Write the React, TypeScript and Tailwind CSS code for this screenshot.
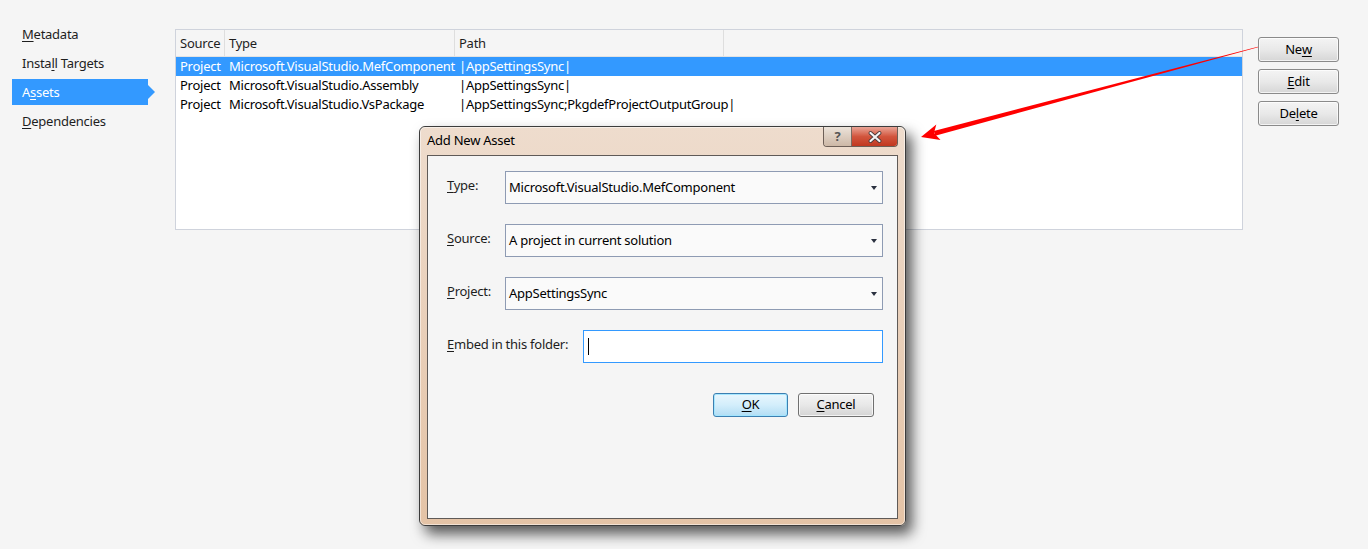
import React from "react";

const font = { fontFamily: '"Noto Sans", "Open Sans", Arial, sans-serif' } as const;

function U({ children }: { children: React.ReactNode }) {
  return <span className="underline underline-offset-2 decoration-1">{children}</span>;
}

function NavItem({ active, children }: { active?: boolean; children: React.ReactNode }) {
  if (active) {
    return (
      <div className="flex h-[26px] items-center">
        <div className="flex h-[26px] w-[136px] items-center bg-[#3399ff] pl-[10px] pt-[1px] text-white">{children}</div>
        <div className="h-0 w-0 border-y-[7px] border-l-[7px] border-y-transparent border-l-[#3399ff]" />
      </div>
    );
  }
  return <div className="flex h-[26px] items-center pl-[10px] pt-[1px] text-[#1e1e1e]">{children}</div>;
}

function SideButton({ children }: { children: React.ReactNode }) {
  return (
    <div className="flex h-[25px] w-[81px] items-center justify-center rounded-[3px] border border-[#8a8a8a] bg-gradient-to-b from-[#f4f4f4] via-[#e9e9e9] to-[#d6d6d6] text-[13px] text-black shadow-[inset_0_0_0_1px_rgba(255,255,255,0.7)]">
      {children}
    </div>
  );
}

function Row({ sel, type, path }: { sel?: boolean; type: string; path: string }) {
  return (
    <div className={`flex h-[19px] items-center text-[13px] ${sel ? "bg-[#3399ff] text-white" : "text-black"}`}>
      <div className="w-[49px] pl-[4px]">Project</div>
      <div className="w-[230px] pl-[4px] whitespace-nowrap">{type}</div>
      <div className="pl-[4px] whitespace-nowrap">{path}</div>
    </div>
  );
}

function Combo({ value }: { value: string }) {
  return (
    <div className="flex h-[33px] flex-1 items-center justify-between border border-[#8e9bb3] bg-[#fafafa] pl-[3px] pr-[5px] text-[13px] text-black">
      <span>{value}</span>
      <div className="h-0 w-0 border-x-[3.5px] border-t-[4px] border-x-transparent border-t-[#2b3140]" />
    </div>
  );
}

export default function App() {
  return (
    <div className="relative h-[549px] w-[1368px] overflow-hidden bg-[#f5f5f5] tracking-[-0.25px]" style={font}>
      <div className="flex">
        {/* nav */}
        <div className="ml-[12px] flex w-[163px] flex-col gap-[3px] pt-[21px] text-[13px]">
          <NavItem><U>M</U>etadata</NavItem>
          <NavItem>Insta<U>l</U>l Targets</NavItem>
          <NavItem active>A<U>s</U>sets</NavItem>
          <NavItem><U>D</U>ependencies</NavItem>
        </div>
        {/* table */}
        <div className="mt-[29px] h-[201px] w-[1068px] border border-[#cfd3dc] bg-white">
          <div className="flex h-[27px] items-center border-b border-[#e3e3e3] bg-[#f5f5f5] text-[13px] text-[#1e1e1e]">
            <div className="flex h-full w-[49px] items-center border-r border-[#dedede] pl-[4px] pt-[1px]">Source</div>
            <div className="flex h-full w-[230px] items-center border-r border-[#dedede] pl-[4px] pt-[1px]">Type</div>
            <div className="flex h-full w-[269px] items-center border-r border-[#dedede] pl-[4px] pt-[1px]">Path</div>
          </div>
          <Row sel type="Microsoft.VisualStudio.MefComponent" path="|AppSettingsSync|" />
          <Row type="Microsoft.VisualStudio.Assembly" path="|AppSettingsSync|" />
          <Row type="Microsoft.VisualStudio.VsPackage" path="|AppSettingsSync;PkgdefProjectOutputGroup|" />
        </div>
        {/* buttons */}
        <div className="ml-[15px] mt-[37px] flex flex-col gap-[7px]">
          <SideButton>Ne<U>w</U></SideButton>
          <SideButton><U>E</U>dit</SideButton>
          <SideButton>De<U>l</U>ete</SideButton>
        </div>
      </div>

      {/* Dialog */}
      <div className="absolute left-[419px] top-[126px] flex h-[400px] w-[487px] flex-col rounded-[6px] border border-[#3c3c3c] bg-gradient-to-b from-[#eedccd] to-[#e4c3a6] shadow-[6px_8px_14px_rgba(0,0,0,0.65)]">
        <div className="pointer-events-none absolute inset-0 rounded-[5px] border border-white/50" />
        <div className="relative flex h-[28px] items-start">
          <div className="pl-[7px] pt-[4px] text-[13px] text-black">Add New Asset</div>
          <div className="absolute right-[7px] top-0 flex h-[20px] overflow-hidden rounded-b-[4px] border border-t-0 border-[#6d5f57]">
            <div className="flex w-[28px] items-center justify-center border-r border-[#7b6a60] bg-gradient-to-b from-[#ece3da] to-[#cdb8a6] text-[13px] font-bold text-[#555]">?</div>
            <div className="flex w-[45px] items-center justify-center bg-gradient-to-b from-[#e8a395] via-[#d2553d] to-[#c1381f]">
              <svg width="14" height="12" viewBox="0 0 14 12">
                <path d="M2.5 2 L11.5 10 M11.5 2 L2.5 10" stroke="#4a3a3a" strokeWidth="3.8" strokeLinecap="round" />
                <path d="M2.5 2 L11.5 10 M11.5 2 L2.5 10" stroke="#f4f4f4" strokeWidth="2.2" strokeLinecap="round" />
              </svg>
            </div>
          </div>
        </div>
        <div className="mx-[7px] mb-[6px] flex flex-1 flex-col border border-[#5f5a57] bg-[#f5f5f5] pl-[19px] pr-[14px] pt-[15px] text-[13px] text-[#1e1e1e]">
          <div className="flex items-center">
            <div className="w-[58px] -mt-[3px]"><U>T</U>ype:</div>
            <Combo value="Microsoft.VisualStudio.MefComponent" />
          </div>
          <div className="mt-[20px] flex items-center">
            <div className="w-[58px] -mt-[3px]"><U>S</U>ource:</div>
            <Combo value="A project in current solution" />
          </div>
          <div className="mt-[20px] flex items-center">
            <div className="w-[58px] -mt-[3px]"><U>P</U>roject:</div>
            <Combo value="AppSettingsSync" />
          </div>
          <div className="mt-[20px] flex items-center">
            <div className="w-[136px] -mt-[3px]"><U>E</U>mbed in this folder:</div>
            <div className="flex h-[33px] flex-1 items-center border border-[#3399ff] bg-white pl-[4px]">
              <div className="h-[17px] w-[1px] bg-black" />
            </div>
          </div>
          <div className="mt-[30px] flex justify-end gap-[10px] pr-[9px]">
            <div className="flex h-[24px] w-[75px] items-center justify-center rounded-[3px] border border-[#3c7fb1] bg-gradient-to-b from-[#e9f6fd] via-[#d3eefb] to-[#b2ddf4] shadow-[inset_0_0_0_1px_rgba(160,230,255,0.9)] text-black">
              <U>O</U>K
            </div>
            <div className="flex h-[24px] w-[76px] items-center justify-center rounded-[3px] border border-[#707070] bg-gradient-to-b from-[#f4f4f4] via-[#e8e8e8] to-[#d4d4d4] shadow-[inset_0_0_0_1px_rgba(255,255,255,0.7)] text-black">
              <U>C</U>ancel
            </div>
          </div>
        </div>
      </div>

      {/* red arrow */}
      <svg className="pointer-events-none absolute left-0 top-0" width="1368" height="549">
        <polygon points="935.2,135.7 933.8,130.9 1257.9,46.8 1258.1,47.2" fill="#ff0000" />
        <polygon points="921,137 936.3,124.6 934,133 940.5,140" fill="#ff0000" />
      </svg>
    </div>
  );
}
